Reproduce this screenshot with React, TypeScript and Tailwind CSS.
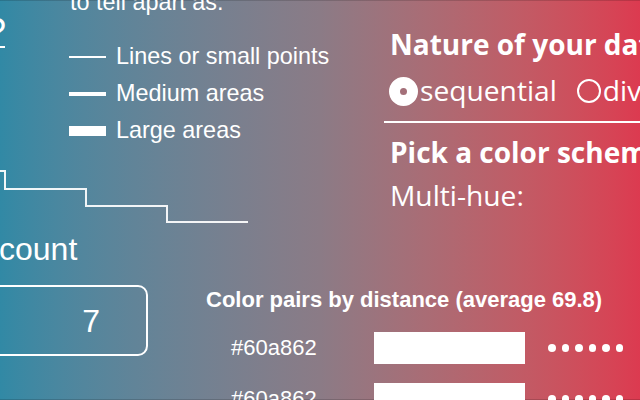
import React from 'react';

const LEGEND = [
  { label: 'Lines or small points', h: 'h-[2px]' },
  { label: 'Medium areas', h: 'h-[4px]' },
  { label: 'Large areas', h: 'h-[10px]' },
];

const PAIRS = ['#60a862', '#60a862'];

function Dots() {
  return (
    <div className="flex items-center gap-[6px]">
      {[0, 1, 2, 3, 4, 5].map(i => (
        <span key={i} className="block w-[7.5px] h-[7.5px] rounded-full bg-white" />
      ))}
    </div>
  );
}

export default function App() {
  return (
    <div className="relative w-[640px] h-[400px] overflow-hidden bg-linear-to-r from-[#3189a5] via-[#8b7b86] to-[#dc3a50] text-white shadow-[inset_0_1px_0_rgba(0,0,0,0.15),inset_0_-1px_0_rgba(0,0,0,0.15)] font-['Liberation_Sans',Arial,sans-serif]">
      {/* top: legend + scheme picker */}
      <div className="flex">
        <div className="w-[384px] shrink-0 flex flex-col">
          <div className="flex items-start">
            <div className="w-[68px] shrink-0 flex flex-col mt-[18px]">
              <span className="-ml-[14px] text-[36px] leading-[28px]">?</span>
              <span className="block w-[5px] h-[2px] bg-white" />
            </div>
            <div className="flex flex-col -mt-[9px]">
              <div className="text-[23.4px] leading-[23px] whitespace-nowrap pl-[2px]">to tell apart as:</div>
              <div className="flex flex-col mt-[24px]">
                {LEGEND.map(row => (
                  <div key={row.label} className="flex items-center h-[37px] pl-[1px]">
                    <span className={`block w-[37px] bg-white ${row.h}`} />
                    <span className="ml-[10px] text-[23.4px] leading-[37px] whitespace-nowrap">{row.label}</span>
                  </div>
                ))}
              </div>
            </div>
          </div>

          <svg className="mt-[19px]" width="250" height="57" viewBox="0 0 250 57" fill="none">
            <path d="M0 3 H5 V21 H86 V38 H167 V54 H248" stroke="rgba(255,255,255,0.92)" strokeWidth="2" />
          </svg>

          <div className="mt-[8px] -ml-[1px] text-[32px] leading-[32px]">count</div>
        </div>

        <div className="flex-1 flex flex-col font-['Open_Sans',sans-serif] whitespace-nowrap">
          <div className="mt-[31px] pl-[6px] text-[28px] leading-[27px] font-bold">Nature of your data</div>
          <div className="flex items-start h-[36px] mt-[10px] pl-[5px]">
            <span className="block mt-[9px] w-[29px] h-[29px] rounded-full border-[11px] border-white" />
            <span className="ml-[2px] mt-[4px] text-[28.2px] leading-[36px]">sequential</span>
            <span className="block mt-[11px] ml-[20px] w-[24px] h-[24px] rounded-full border-2 border-white" />
            <span className="ml-[2px] mt-[4px] text-[28.2px] leading-[36px]">diverging</span>
          </div>
          <div className="mt-[17px] h-[2px] bg-white" />
          <div className="mt-[16px] pl-[6px] text-[28px] leading-[27px] font-bold">Pick a color scheme</div>
          <div className="mt-[11px] pl-[6px] text-[28.2px] leading-[36px]">Multi-hue:</div>
        </div>
      </div>

      {/* bottom: count input + color pairs */}
      <div className="flex items-start mt-[20px]">
        <div className="-ml-[10px] w-[158px] h-[71px] shrink-0 flex items-center justify-end pr-[46px] border-2 border-white rounded-[10px]">
          <span className="text-[32px] leading-[32px]">7</span>
        </div>
        <div className="ml-[58px] mt-[4px] flex flex-col">
          <div className="text-[22px] leading-[22px] font-bold whitespace-nowrap">Color pairs by distance (average 69.8)</div>
          <div className="mt-[21px] flex flex-col gap-[19px]">
            {PAIRS.map((hex, i) => (
              <div key={i} className="flex items-center h-[32px]">
                <span className="w-[168px] shrink-0 pl-[25px] text-[22px] leading-[32px]">{hex}</span>
                <span className="block w-[151px] h-[32px] shrink-0 bg-white" />
                <span className="ml-[23px] shrink-0"><Dots /></span>
              </div>
            ))}
          </div>
        </div>
      </div>
    </div>
  );
}
